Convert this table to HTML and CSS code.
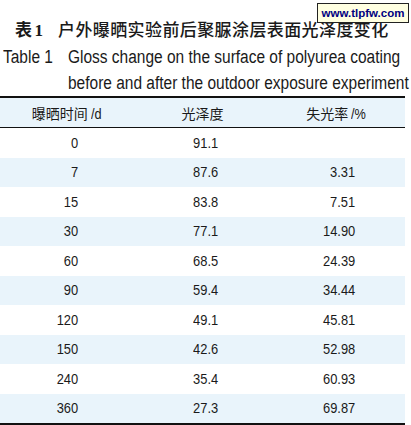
FILE: index.html
```html
<!DOCTYPE html>
<html lang="zh-CN">

<head>
    <meta charset="UTF-8">
    <meta name="viewport" content="width=device-width, initial-scale=1.0">
    <title>表1 光泽度变化</title>
    <link rel="stylesheet" href="styles.css">
</head>

<body>
    <div class="stamp">www.tlpfw.com</div>

    <div class="caption">
        <p class="cnTitle"><span class="cnNo">表<b>1</b></span>户外曝晒实验前后聚脲涂层表面光泽度变化</p>
        <div class="enTitle">
            <span class="enNo"><span class="narrow">Table 1</span></span>
            <span class="enText narrow">Gloss change on the surface of polyurea coating<br>before and after the outdoor exposure experiment</span>
        </div>
    </div>

    <table class="gloss">
        <thead>
            <tr>
                <th>曝晒时间 <span class="unit">/d</span></th>
                <th>光泽度</th>
                <th>失光率 <span class="unit">/%</span></th>
            </tr>
        </thead>
        <tbody>
            <tr><td class="c1"><span>0</span></td><td class="c2"><span>91.1</span></td><td class="c3"></td></tr>
            <tr><td class="c1"><span>7</span></td><td class="c2"><span>87.6</span></td><td class="c3"><span>3.31</span></td></tr>
            <tr><td class="c1"><span>15</span></td><td class="c2"><span>83.8</span></td><td class="c3"><span>7.51</span></td></tr>
            <tr><td class="c1"><span>30</span></td><td class="c2"><span>77.1</span></td><td class="c3"><span>14.90</span></td></tr>
            <tr><td class="c1"><span>60</span></td><td class="c2"><span>68.5</span></td><td class="c3"><span>24.39</span></td></tr>
            <tr><td class="c1"><span>90</span></td><td class="c2"><span>59.4</span></td><td class="c3"><span>34.44</span></td></tr>
            <tr><td class="c1"><span>120</span></td><td class="c2"><span>49.1</span></td><td class="c3"><span>45.81</span></td></tr>
            <tr><td class="c1"><span>150</span></td><td class="c2"><span>42.6</span></td><td class="c3"><span>52.98</span></td></tr>
            <tr><td class="c1"><span>240</span></td><td class="c2"><span>35.4</span></td><td class="c3"><span>60.93</span></td></tr>
            <tr><td class="c1"><span>360</span></td><td class="c2"><span>27.3</span></td><td class="c3"><span>69.87</span></td></tr>
        </tbody>
    </table>
</body>

</html>
```

FILE: styles.css
```css
body {
    margin: 0;
    width: 411px;
    background-color: white;
    color: #1a1a1a;
    font-family: "Liberation Sans", "Noto Sans CJK SC", sans-serif;
    position: relative;
}

.stamp {
    position: absolute;
    top: 3px;
    left: 317px;
    width: 90px;
    height: 18px;
    border: 1px solid #222;
    background-color: #ffffe1;
    color: #000080;
    font-family: "Liberation Sans", sans-serif;
    font-weight: bold;
    font-size: 11.5px;
    line-height: 18px;
    text-align: center;
}

.caption {
    padding-top: 15px;
    height: 81px;
}

.cnTitle {
    margin: 0 0 0 15px;
    height: 29px;
    line-height: 28px;
    font-family: "Noto Sans CJK SC", sans-serif;
    font-weight: 500;
    font-size: 17px;
    letter-spacing: 0.4px;
}

.cnNo {
    display: inline-block;
    width: 43px;
    font-weight: bold;
}

.cnNo b {
    font-family: "Liberation Serif", serif;
    margin-left: 2px;
}

.enTitle {
    display: flex;
    font-size: 18px;
    line-height: 26px;
    padding-left: 3px;
}

.narrow {
    display: inline-block;
    transform: scaleX(0.86);
    transform-origin: left center;
    white-space: nowrap;
}

.enNo {
    width: 65px;
    flex-shrink: 0;
}

.gloss {
    width: 405px;
    border-collapse: collapse;
    table-layout: fixed;
    border-top: 2px solid #111;
    border-bottom: 2px solid #111;
    font-size: 14.5px;
}

.gloss th {
    height: 29px;
    padding: 0;
    font-family: "Noto Sans CJK SC", sans-serif;
    font-weight: normal;
    font-size: 14px;
    background-color: #e9f4fb;
    border-bottom: 1px solid #111;
    text-align: center;
}

.unit {
    display: inline-block;
    font-family: "Liberation Sans", sans-serif;
    font-size: 15px;
    transform: scaleX(0.85);
    transform-origin: left center;
}

.gloss td {
    height: 29.5px;
    padding: 0;
    text-align: right;
}

.gloss td span {
    display: inline-block;
    transform: scaleX(0.89);
    transform-origin: right center;
}

.gloss tbody tr:nth-child(even) td {
    background-color: #e9f4fb;
}

.c1 {
    padding-right: 57px !important;
}

.c2 {
    padding-right: 52px !important;
}

.c3 {
    padding-right: 50px !important;
}
```
